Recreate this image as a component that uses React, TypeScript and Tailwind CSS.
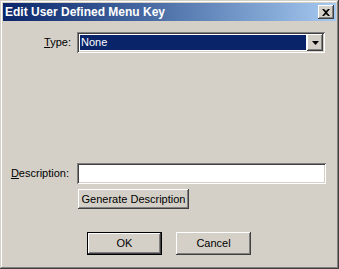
import React from 'react';

// Win2k classic bevels
const raised =
  'shadow-[inset_-1px_-1px_#404040,inset_1px_1px_#ffffff,inset_-2px_-2px_#808080,inset_2px_2px_#d4d0c8]';
const sunken =
  'shadow-[inset_1px_1px_#808080,inset_-1px_-1px_#ffffff,inset_2px_2px_#404040,inset_-2px_-2px_#d4d0c8]';

const Button: React.FC<{ label: string; className?: string; isDefault?: boolean }> = ({
  label,
  className = '',
  isDefault,
}) => (
  <div className={`${isDefault ? 'border border-black' : ''} ${className}`}>
    <div className={`w-full h-full bg-[#d4d0c8] ${raised} flex items-center justify-center text-black`}>
      {label}
    </div>
  </div>
);

export default function App() {
  return (
    <div
      className="w-[339px] h-[269px] bg-[#d4d0c8] p-[3px] flex flex-col text-[11px] text-black shadow-[inset_-1px_-1px_#404040,inset_1px_1px_#d4d0c8,inset_-2px_-2px_#808080,inset_2px_2px_#ffffff]"
      style={{ fontFamily: '"Liberation Sans", Arial, sans-serif' }}
    >
      {/* Caption */}
      <div className="h-[18px] flex items-center justify-between bg-gradient-to-r from-[#0a246a] to-[#a6caf0] pl-[2px] pr-[2px]">
        <span className="text-white font-bold text-[12px] leading-none">Edit User Defined Menu Key</span>
        <div className={`w-[16px] h-[14px] bg-[#d4d0c8] ${raised} flex items-center justify-center`}>
          <svg width="8" height="7" viewBox="0 0 8 7">
            <path d="M0 0h2l2 2 2-2h2L5 3.5 8 7H6L4 5 2 7H0l3-3.5z" fill="#000" />
          </svg>
        </div>
      </div>

      {/* Type row */}
      <div className="flex items-center mt-[11px]">
        <div className="w-[69px] text-right pr-[1px]">
          <span className="underline underline-offset-1">T</span>ype:
        </div>
        <div className={`ml-[5px] w-[248px] h-[21px] bg-white ${sunken} p-[2px] flex`}>
          <div className="flex-1 m-[1px] bg-[#0a246a] text-white flex items-center pl-[1px]">None</div>
          <div className={`w-[16px] h-[17px] bg-[#d4d0c8] ${raised} flex items-center justify-center`}>
            <svg width="7" height="4" viewBox="0 0 7 4">
              <path d="M0 0h7L3.5 4z" fill="#000" />
            </svg>
          </div>
        </div>
      </div>

      {/* Description row */}
      <div className="flex items-center mt-[110px]">
        <div className="w-[67px] text-right pr-[1px]">
          <span className="underline underline-offset-1">D</span>escription:
        </div>
        <div className={`ml-[7px] w-[249px] h-[21px] bg-white ${sunken}`} />
      </div>

      <Button label="Generate Description" className="ml-[75px] mt-[5px] w-[111px] h-[20px]" />

      {/* OK / Cancel */}
      <div className="flex mt-[23px] ml-[84px] gap-[14px]">
        <Button label="OK" isDefault className="w-[75px] h-[23px]" />
        <Button label="Cancel" className="w-[75px] h-[23px]" />
      </div>
    </div>
  );
}
